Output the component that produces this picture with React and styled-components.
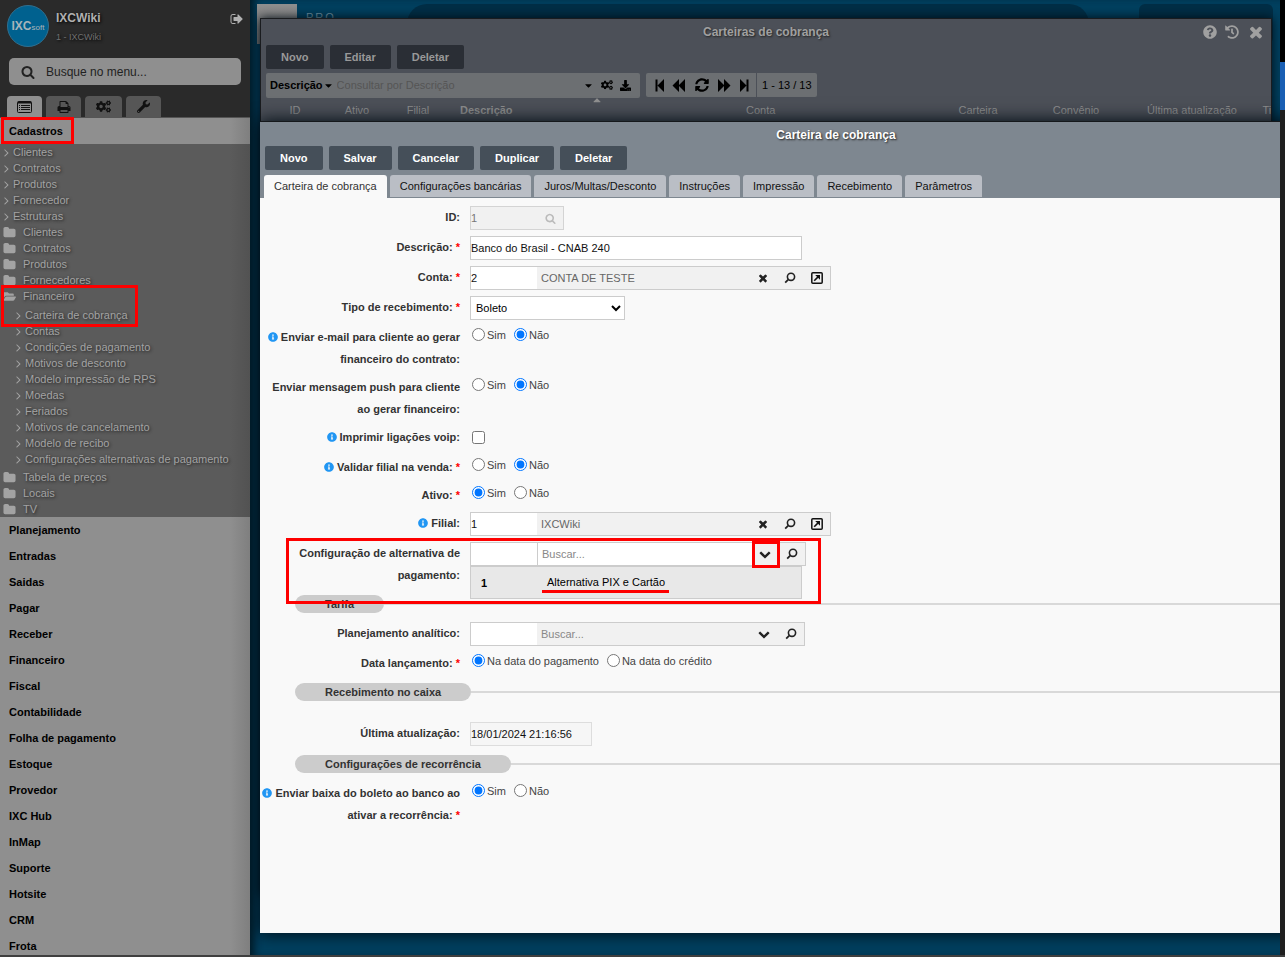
import React from 'react';
import styled, { createGlobalStyle, css } from 'styled-components';
import {
    FaCogs, FaWrench, FaFolderOpen, FaQuestionCircle, FaHistory, FaCaretDown, FaCaretUp,
    FaDownload, FaSyncAlt, FaInfoCircle,
} from 'react-icons/fa';

const shortcuts = ['Clientes', 'Contratos', 'Produtos', 'Fornecedor', 'Estruturas'];
const foldersBefore = ['Clientes', 'Contratos', 'Produtos', 'Fornecedores'];
const foldersAfter = ['Tabela de preços', 'Locais', 'TV'];
const financeiro = [
    'Contas', 'Condições de pagamento', 'Motivos de desconto', 'Modelo impressão de RPS', 'Moedas',
    'Feriados', 'Motivos de cancelamento', 'Modelo de recibo', 'Configurações alternativas de pagamento',
];
const sections = [
    'Planejamento', 'Entradas', 'Saidas', 'Pagar', 'Receber', 'Financeiro', 'Fiscal', 'Contabilidade',
    'Folha de pagamento', 'Estoque', 'Provedor', 'IXC Hub', 'InMap', 'Suporte', 'Hotsite', 'CRM', 'Frota',
];
const tabs = [
    'Carteira de cobrança', 'Configurações bancárias', 'Juros/Multas/Desconto', 'Instruções',
    'Impressão', 'Recebimento', 'Parâmetros',
];

/* ==============Icons============== */

const Glyph = ({ size, d }) => (
    <svg width={size} height={size} viewBox="0 0 1792 1792" fill="currentColor"><path d={d} /></svg>
);

const icons = {
    times: 'M1490 1322q0 40-28 68l-136 136q-28 28-68 28t-68-28l-294-294-294 294q-28 28-68 28t-68-28l-136-136q-28-28-28-68t28-68l294-294-294-294q-28-28-28-68t28-68l136-136q28-28 68-28t68 28l294 294 294-294q28-28 68-28t68 28l136 136q28 28 28 68t-28 68l-294 294 294 294q28 28 28 68z',
    folder: 'M1728 608v704q0 92-66 158t-158 66h-1216q-92 0-158-66t-66-158v-960q0-92 66-158t158-66h320q92 0 158 66t66 158v32h672q92 0 158 66t66 158z',
    chevron: 'M1683 808l-742 741q-19 19-45 19t-45-19l-742-741q-19-19-19-45.5t19-45.5l166-165q19-19 45-19t45 19l531 531 531-531q19-19 45-19t45 19l166 165q19 19 19 45.5t-19 45.5z',
    search: 'M1216 832q0-185-131.5-316.5t-316.5-131.5-316.5 131.5-131.5 316.5 131.5 316.5 316.5 131.5 316.5-131.5 131.5-316.5zm512 832q0 52-38 90t-90 38q-54 0-90-38l-343-342q-179 124-399 124-143 0-273.5-55.5t-225-150-150-225-55.5-273.5 55.5-273.5 150-225 225-150 273.5-55.5 273.5 55.5 225 150 150 225 55.5 273.5q0 220-124 399l343 343q37 37 37 90z',
    angle: 'M1171 960q0 13-10 23l-466 466q-10 10-23 10t-23-10l-50-50q-10-10-10-23t10-23l393-393-393-393q-10-10-10-23t10-23l50-50q10-10 23-10t23 10l466 466q10 10 10 23z',
    signOut: 'M704 1440q0 4 1 20t.5 26.5-3 23.5-10 19.5-20.5 6.5h-320q-119 0-203.5-84.5t-84.5-203.5v-704q0-119 84.5-203.5t203.5-84.5h320q13 0 22.5 9.5t9.5 22.5q0 4 1 20t.5 26.5-3 23.5-10 19.5-20.5 6.5h-320q-66 0-113 47t-47 113v704q0 66 47 113t113 47h312l11.5 1 11.5 3 8 5.5 7 9 2 13.5zm928-544q0 26-19 45l-544 544q-19 19-45 19t-45-19-19-45v-288h-448q-26 0-45-19t-19-45v-384q0-26 19-45t45-19h448v-288q0-26 19-45t45-19 45 19l544 544q19 19 19 45z',
    print: 'M448 1536h896v-256h-896v256zm0-640h896v-384h-160q-40 0-68-28t-28-68v-160h-640v640zm1152 64q0-26-19-45t-45-19-45 19-19 45 19 45 45 19 45-19 19-45zm128 0v416q0 13-9.5 22.5t-22.5 9.5h-224v160q0 40-28 68t-68 28h-960q-40 0-68-28t-28-68v-160h-224q-13 0-22.5-9.5t-9.5-22.5v-416q0-79 56.5-135.5t135.5-56.5h64v-544q0-40 28-68t68-28h672q40 0 88 20t76 48l152 152q28 28 48 76t20 88v256h64q79 0 135.5 56.5t56.5 135.5z',
};

const ListIcon = () => (
    <svg width="15" height="12" viewBox="0 0 15 12" fill="none" stroke="currentColor">
        <rect x="0.5" y="0.5" width="14" height="11" rx="1" />
        <path d="M1 1.5h13" strokeWidth="2" />
        <path d="M2 4.5h1M2 6.5h1M2 8.5h1M4 4.5h9M4 6.5h9M4 8.5h9" />
    </svg>
);

const LensIcon = () => (
    <svg width="12" height="12" viewBox="0 0 12 12" fill="none" stroke="currentColor">
        <circle cx="7" cy="4.8" r="3.6" strokeWidth="1.6" />
        <path d="M4.2 7.6L1.2 10.6" strokeWidth="1.8" />
    </svg>
);

const OpenIcon = () => (
    <svg width="12" height="12" viewBox="0 0 12 12" fill="none" stroke="#111">
        <rect x="0.8" y="0.8" width="10.4" height="10.4" rx="1" strokeWidth="1.5" />
        <path d="M3.2 8.8L7.6 4.4" strokeWidth="1.6" />
        <path d="M4.2 3h4.8v4.8z" fill="#111" stroke="none" />
    </svg>
);

const StepIcon = ({ flip }) => (
    <svg width="9" height="13" viewBox="0 0 9 13" fill="currentColor">
        <path d={flip ? 'M0 0L6.5 6.5L0 13zM6.5 0.5h2v12h-2z' : 'M9 0L2.5 6.5L9 13zM0.500 0.5h2v12h-2z'} />
    </svg>
);

const SkipIcon = ({ flip }) => (
    <svg width="14" height="13" viewBox="0 0 14 13" fill="currentColor">
        <path d={flip ? 'M1 0L7 6V0L13.5 6.5L7 13V7L1 13z' : 'M13 0L7 6V0L0.5 6.5L7 13V7L13 13z'} />
    </svg>
);

/* ==============Fields============== */

const Radios = ({ name, options, value }) => (
    <RadioGroup>
        {options.map((o) => (
            <label key={o}>
                <input type="radio" name={name} defaultChecked={o === value} />
                {o}
            </label>
        ))}
    </RadioGroup>
);

const yesNo = ['Sim', 'Não'];

const Field = ({ label, id, info, required, group, children }) => (
    <Row role={group ? 'group' : undefined} aria-label={group ? label : undefined}>
        <Label as={group ? 'span' : 'label'} htmlFor={group ? undefined : id}>
            {info && <FaInfoCircle />}
            {label}:{required && <b> *</b>}
        </Label>
        {children}
    </Row>
);

const Lookup = ({ id, code, text, open, children }) => (
    <LookupBox $open={open} $filled={!!text}>
        <input id={id} className="code" defaultValue={code} />
        <input className="text" aria-label="Buscar" placeholder="Buscar..." defaultValue={text} />
        {children}
    </LookupBox>
);

const FilledTools = () => (
    <>
        <Tool aria-label="Limpar"><Glyph size={12} d={icons.times} /></Tool>
        <Tool aria-label="Procurar"><LensIcon /></Tool>
        <Tool aria-label="Abrir"><OpenIcon /></Tool>
    </>
);

const Divider = ({ children, tall }) => (
    <DividerBox $tall={tall}><h3>{children}</h3></DividerBox>
);

/* ==============Sidebar============== */

const ArrowItem = ({ children, ...rest }) => (
    <Item href="#item" {...rest}><Glyph size={13} d={icons.angle} />{children}</Item>
);

const FolderItem = ({ children }) => (
    <Item href="#item" $folder><Glyph size={13} d={icons.folder} />{children}</Item>
);

const Menu = () => (
    <Sidebar>
        <Profile>
            <Logo>IXC<small>soft</small></Logo>
            <div className="who">
                <strong>IXCWiki</strong>
                <span>1 - IXCWiki</span>
            </div>
            <button aria-label="Sair"><Glyph size={14} d={icons.signOut} /></button>
        </Profile>
        <MenuSearch>
            <Glyph size={14} d={icons.search} />
            <input aria-label="Busque no menu" placeholder="Busque no menu..." />
        </MenuSearch>
        <MenuTabs>
            <MenuTab $active aria-label="Menu"><ListIcon /></MenuTab>
            <MenuTab aria-label="Imprimir"><Glyph size={14} d={icons.print} /></MenuTab>
            <MenuTab aria-label="Configurações"><FaCogs size={15} /></MenuTab>
            <MenuTab aria-label="Ferramentas"><FaWrench size={13} /></MenuTab>
        </MenuTabs>
        <Section href="#cadastros">
            Cadastros
            <Mark $top={-1} $left={1} $width={73} $height={27} />
        </Section>
        <SubMenu>
            {shortcuts.map((s) => <ArrowItem key={s}>{s}</ArrowItem>)}
            {foldersBefore.map((s) => <FolderItem key={s}>{s}</FolderItem>)}
            <MarkedItems>
                <Item href="#item" $folder><FaFolderOpen size={13} />Financeiro</Item>
                <ArrowItem $nested $first>Carteira de cobrança</ArrowItem>
                <Mark $top={-3} $left={1} $width={137} $height={42} />
            </MarkedItems>
            {financeiro.map((s) => <ArrowItem key={s} $nested>{s}</ArrowItem>)}
            <FolderGroup>
                {foldersAfter.map((s) => <FolderItem key={s}>{s}</FolderItem>)}
            </FolderGroup>
        </SubMenu>
        {sections.map((s) => <Section href="#secao" key={s}>{s}</Section>)}
    </Sidebar>
);

/* ==============Windows============== */

const ListWindow = () => (
    <BackWindow>
        <TitleBar>
            <h2>Carteiras de cobrança</h2>
            <div className="actions">
                <button aria-label="Ajuda"><FaQuestionCircle size={14} /></button>
                <button aria-label="Histórico"><FaHistory size={14} /></button>
                <button aria-label="Fechar"><Glyph size={18} d={icons.times} /></button>
            </div>
        </TitleBar>
        <Buttons>
            <Button $dim>Novo</Button>
            <Button $dim>Editar</Button>
            <Button $dim>Deletar</Button>
        </Buttons>
        <Toolbar>
            <Query>
                <button className="by">Descrição <FaCaretDown size={11} /></button>
                <input aria-label="Consultar" placeholder="Consultar por Descrição" />
                <button aria-label="Opções"><FaCaretDown size={11} /></button>
                <button aria-label="Configurar"><FaCogs size={12} /></button>
                <button aria-label="Exportar"><FaDownload size={11} /></button>
            </Query>
            <Pager>
                <button aria-label="Primeira"><StepIcon /></button>
                <button aria-label="Anterior"><SkipIcon /></button>
                <button aria-label="Atualizar" className="reload"><FaSyncAlt size={14} /></button>
                <button aria-label="Próxima"><SkipIcon flip /></button>
                <button aria-label="Última"><StepIcon flip /></button>
                <span>1 - 13 / 13</span>
            </Pager>
        </Toolbar>
        <Grid>
            <thead>
                <tr>
                    <Th $width={58}>ID</Th>
                    <Th $width={66}>Ativo</Th>
                    <Th $width={56}>Filial</Th>
                    <Th $width={286} $left $bold>Descrição<FaCaretUp size={12} /></Th>
                    <Th $width={200} $left>Conta</Th>
                    <Th $width={92}>Carteira</Th>
                    <Th $width={104}>Convênio</Th>
                    <Th $width={128}>Última atualização</Th>
                    <Th $width={34}>Tipo</Th>
                </tr>
            </thead>
        </Grid>
    </BackWindow>
);

const FormWindow = () => (
    <FrontWindow>
        <FormHeader>
            <TitleBar $bright><h2>Carteira de cobrança</h2></TitleBar>
            <Buttons>
                <Button>Novo</Button>
                <Button>Salvar</Button>
                <Button>Cancelar</Button>
                <Button>Duplicar</Button>
                <Button>Deletar</Button>
            </Buttons>
            <Tabs>
                {tabs.map((t, i) => <Tab key={t} $active={i === 0}>{t}</Tab>)}
            </Tabs>
        </FormHeader>
        <Form>
            <Field label="ID" id="id">
                <IdBox>
                    <input id="id" defaultValue="1" disabled />
                    <Glyph size={11} d={icons.search} />
                </IdBox>
            </Field>
            <Field label="Descrição" id="descricao" required>
                <TextInput id="descricao" $width={332} defaultValue="Banco do Brasil - CNAB 240" />
            </Field>
            <Field label="Conta" id="conta" required>
                <Lookup id="conta" code="2" text="CONTA DE TESTE"><FilledTools /></Lookup>
            </Field>
            <Field label="Tipo de recebimento" id="tipo" required>
                <Select id="tipo"><option>Boleto</option></Select>
            </Field>
            <Field label="Enviar e-mail para cliente ao gerar financeiro do contrato" info group>
                <Radios name="email" options={yesNo} value="Não" />
            </Field>
            <Field label="Enviar mensagem push para cliente ao gerar financeiro" group>
                <Radios name="push" options={yesNo} value="Não" />
            </Field>
            <Field label="Imprimir ligações voip" id="voip" info>
                <CheckHolder><input type="checkbox" id="voip" /></CheckHolder>
            </Field>
            <Field label="Validar filial na venda" info required group>
                <Radios name="validar" options={yesNo} value="Não" />
            </Field>
            <Field label="Ativo" required group>
                <Radios name="ativo" options={yesNo} value="Sim" />
            </Field>
            <Field label="Filial" id="filial" info>
                <Lookup id="filial" code="1" text="IXCWiki"><FilledTools /></Lookup>
            </Field>
            <MarkedItems>
                <Field label="Configuração de alternativa de pagamento" id="alternativa">
                    <Lookup id="alternativa" open>
                        <Tool aria-label="Expandir">
                            <Glyph size={12} d={icons.chevron} />
                            <Mark $top={-2} $left={0} $width={28} $height={27} />
                        </Tool>
                        <Tool aria-label="Procurar"><LensIcon /></Tool>
                        <Options role="listbox">
                            <li role="option" aria-selected="true">
                                <b>1</b>
                                <span>Alternativa PIX e Cartão</span>
                            </li>
                        </Options>
                    </Lookup>
                </Field>
                <Mark $top={-4} $left={26} $width={535} $height={66} />
            </MarkedItems>
            <Divider>Tarifa</Divider>
            <Field label="Planejamento analítico" id="planejamento">
                <Lookup id="planejamento">
                    <Tool aria-label="Expandir"><Glyph size={12} d={icons.chevron} /></Tool>
                    <Tool aria-label="Procurar"><LensIcon /></Tool>
                </Lookup>
            </Field>
            <Field label="Data lançamento" required group>
                <Radios
                    name="data"
                    options={['Na data do pagamento', 'Na data do crédito']}
                    value="Na data do pagamento"
                />
            </Field>
            <Divider tall>Recebimento no caixa</Divider>
            <Field label="Última atualização" id="atualizacao">
                <TextInput id="atualizacao" $width={122} $locked readOnly defaultValue="18/01/2024 21:16:56" />
            </Field>
            <Divider>Configurações de recorrência</Divider>
            <Field label="Enviar baixa do boleto ao banco ao ativar a recorrência" info required group>
                <Radios name="baixa" options={yesNo} value="Sim" />
            </Field>
        </Form>
    </FrontWindow>
);

const App = () => (
    <>
        <GlobalStyle />
        <Page>
            <Menu />
            <Desktop>
                <TopBar>
                    <div className="logo"></div>
                    <div className="brand">PRO —</div>
                    <div className="search"></div>
                    <div className="user"></div>
                </TopBar>
                <ListWindow />
                <FormWindow />
            </Desktop>
            <ScrollTrack><div></div></ScrollTrack>
        </Page>
    </>
);

const GlobalStyle = createGlobalStyle`
    * {
        box-sizing: border-box;
    }
    body {
        margin: 0;
        background: #3f3f3f;
        font-family: "Liberation Sans", Arial, sans-serif;
        font-size: 11px;
        overflow: hidden;
    }
    button, input, select {
        font: inherit;
        color: inherit;
    }
    button {
        border: 0;
        padding: 0;
        background: none;
        display: flex;
        align-items: center;
        justify-content: center;
    }
    a {
        color: inherit;
        text-decoration: none;
    }
    h2, h3, ul {
        margin: 0;
        padding: 0;
        font-size: inherit;
    }
    svg {
        flex: none;
    }
`

const Page = styled.div`
    display: flex;
    height: 100vh;
    border-bottom: 2px solid #3f3f3f;
`

const Mark = styled.i`
    position: absolute;
    z-index: 5;
    top: ${(p) => p.$top}px;
    left: ${(p) => p.$left}px;
    width: ${(p) => p.$width}px;
    height: ${(p) => p.$height}px;
    border: 3px solid #fe0000;
    pointer-events: none;
`

const MarkedItems = styled.div`
    position: relative;
`

const Sidebar = styled.nav`
    width: 250px;
    flex: none;
    overflow: hidden;
    background: #2a2a2a;
    color: #a0a0a0;
`

const Profile = styled.div`
    display: flex;
    align-items: flex-start;
    padding: 5px 6px 0 7px;
    height: 58px;

    .who {
        flex: 1;
        display: flex;
        flex-direction: column;
        padding: 5px 0 0 7px;
        text-shadow: 1px 1px 3px #000;
    }
    strong {
        font-size: 12px;
        line-height: 16px;
        color: #b0b0b0;
    }
    span {
        margin-top: 5px;
        font-size: 9px;
        line-height: 12px;
        color: #707070;
    }
    button {
        margin-top: 7px;
        color: #b0b0b0;
    }
`

const Logo = styled.div`
    display: flex;
    align-items: baseline;
    justify-content: center;
    width: 42px;
    height: 42px;
    border: 1px solid #2f6f8f;
    border-radius: 50%;
    background: #00618f;
    color: #a8b4ba;
    font-size: 12px;
    font-weight: bold;
    line-height: 40px;

    small {
        font-size: 8px;
        font-weight: normal;
    }
`

const MenuSearch = styled.div`
    display: flex;
    align-items: center;
    gap: 9px;
    height: 27px;
    margin: 0 9px 11px;
    padding-left: 12px;
    border-radius: 5px;
    background: #8f8f8f;
    color: #222;

    input {
        flex: 1;
        border: 0;
        background: none;
        font-size: 12px;
    }
    input::placeholder {
        color: #222;
    }
`

const MenuTabs = styled.div`
    display: flex;
    gap: 4px;
    padding-left: 7px;
    border-bottom: 1px solid #555;
`

const MenuTab = styled.button`
    width: 35px;
    height: 21px;
    border-radius: 4px 4px 0 0;
    background: ${(p) => (p.$active ? '#8f8f8f' : '#565656')};
    color: #111;

    &:nth-child(3) {
        width: 37px;
    }
`

const Section = styled.a`
    position: relative;
    display: block;
    padding-left: 9px;
    line-height: 26px;
    font-weight: bold;
    color: #000;
    background: linear-gradient(to right, #8f8f8f 230px, #7f7f7f);
`

const SubMenu = styled.div`
    background: linear-gradient(to right, #5b5b5b 230px, #525252);
    text-shadow: 1px 1px 3px #222;
`

const FolderGroup = styled.div`
    padding-top: 2px;
`

const Item = styled.a`
    display: flex;
    align-items: center;
    height: 16px;
    padding-left: ${(p) => (p.$nested ? 12 : 0)}px;
    color: #a3a3a3;

    ${(p) => p.$first && css`
        margin-top: 3px;
    `}
    ${(p) => p.$folder && css`
        padding-left: 3px;

        svg {
            margin-right: 7px;
        }
    `}
`

const Desktop = styled.main`
    position: relative;
    flex: 1;
    min-width: 0;
    overflow: hidden;
    background: #00405f;
    box-shadow: inset 8px 0 8px -4px #001824;
`

const TopBar = styled.div`
    display: flex;
    height: 40px;
    margin: 4px 7px;

    .logo {
        width: 40px;
        background: linear-gradient(#8f8f8f, #6f6f6f);
    }
    .brand {
        width: 110px;
        padding: 7px 0 0 9px;
        color: #6f93a3;
        letter-spacing: 2px;
    }
    .search {
        flex: 1;
        border-radius: 20px;
        background: #002e46;
    }
    .user {
        width: 134px;
        margin-left: 50px;
        border-radius: 6px;
        background: #002e46;
    }
`

const BackWindow = styled.section`
    position: absolute;
    top: 18px;
    right: 8px;
    bottom: 60px;
    left: 10px;
    overflow: hidden;
    border: 1px solid #1a1c1f;
    background: #4c5058;
    box-shadow: 0 0 10px #000c14;
    color: #8f8f8f;
`

const FrontWindow = styled.section`
    position: absolute;
    top: 121px;
    right: -132px;
    bottom: 22px;
    left: 10px;
    border-top: 1px solid #15181b;
    background: #f9f9f9;
    box-shadow: 0 0 16px 1px #000c14;
    color: #333;
`

const TitleBar = styled.header`
    position: relative;
    height: ${(p) => (p.$bright ? 24 : 26)}px;
    line-height: 26px;
    font-size: 12px;
    text-align: center;
    color: ${(p) => (p.$bright ? '#fff' : '#a0a0a0')};
    text-shadow: 1px 1px 2px #222;

    .actions {
        position: absolute;
        top: 5px;
        right: 6px;
        height: 16px;
        display: flex;
        gap: 8px;
    }
`

const Buttons = styled.div`
    display: flex;
    gap: 6px;
    padding: 0 5px;
`

const Button = styled.button`
    height: 24px;
    padding: 0 15px;
    border-radius: 2px;
    font-weight: bold;
    background: ${(p) => (p.$dim ? '#2a2e35' : '#454f59')};
    color: ${(p) => (p.$dim ? '#999' : '#fff')};
`

const Toolbar = styled.div`
    display: flex;
    gap: 6px;
    padding: 4px 5px 0;
`

const Query = styled.div`
    display: flex;
    align-items: center;
    gap: 7px;
    width: 374px;
    height: 25px;
    padding: 0 9px 1px 4px;
    border-radius: 2px;
    background: #6c6f72;
    color: #000;

    .by {
        font-weight: bold;
    }
    input {
        flex: 1;
        min-width: 0;
        border: 0;
        padding: 0;
        margin-left: -4px;
        background: none;
    }
    input::placeholder {
        color: #555;
    }
`

const Pager = styled.div`
    display: flex;
    align-items: center;
    height: 24px;
    padding-left: 3px;
    border-radius: 2px;
    background: #6c6f72;
    color: #000;

    button {
        width: 20px;
    }
    .reload {
        width: 25px;
    }
    span {
        margin-left: 2px;
        padding: 0 5px;
        border-left: 1px solid #4c5058;
        line-height: 24px;
    }
`

const Grid = styled.table`
    width: 1024px;
    margin-left: 5px;
    table-layout: fixed;
    border-collapse: collapse;
`

const Th = styled.th`
    position: relative;
    width: ${(p) => p.$width}px;
    height: 24px;
    padding: 0 0 0 ${(p) => (p.$left ? 14 : 0)}px;
    text-align: ${(p) => (p.$left ? 'left' : 'center')};
    font-weight: ${(p) => (p.$bold ? 'bold' : 'normal')};
    white-space: nowrap;

    svg {
        position: absolute;
        top: -4px;
        left: 145px;
    }
`

const FormHeader = styled.div`
    height: 76px;
    background: #7e8790;
`

const Tabs = styled.div`
    display: flex;
    gap: 3px;
    padding: 5px 4px 0;
`

const Tab = styled.button`
    height: ${(p) => (p.$active ? 23 : 22)}px;
    padding: 0 10px ${(p) => (p.$active ? 1 : 0)}px;
    border-radius: 3px 3px 0 0;
    background: ${(p) => (p.$active ? '#f9f9f9' : '#babec5')};
    color: ${(p) => (p.$active ? '#333' : '#111')};
`

const Form = styled.form`
    padding-top: 8px;
`

const Row = styled.div`
    display: flex;
    align-items: flex-start;
    gap: 10px;
    padding-bottom: 6px;
`

const Label = styled.label`
    width: 200px;
    line-height: 22px;
    font-weight: bold;
    text-align: right;

    svg {
        width: 10px;
        height: 10px;
        margin-right: 3px;
        vertical-align: -1px;
        color: #2196f3;
    }
    b {
        color: #f00;
    }
`

const fieldBox = css`
    height: 24px;
    border: 1px solid #ccc;
    background: #fff;
`

const TextInput = styled.input`
    ${fieldBox}
    width: ${(p) => p.$width}px;
    padding: 0;
    color: #111;
    ${(p) => p.$locked && css`
        background: #f6f6f6;
        border-color: #ddd;
    `}
`

const Select = styled.select`
    ${fieldBox}
    width: 155px;
    padding: 0 0 0 1px;
    border-radius: 0;
    color: #000;
`

const IdBox = styled.div`
    ${fieldBox}
    display: flex;
    align-items: center;
    width: 94px;
    background: #f1f1f1;
    border-color: #d4d4d4;
    color: #bbb;

    input {
        width: 74px;
        padding: 0;
        border: 0;
        background: none;
        color: #777;
    }
`

const LookupBox = styled.div`
    ${fieldBox}
    position: relative;
    display: flex;
    background: #f1f1f1;

    input {
        border: 0;
        padding: 0;
    }
    .code {
        width: 66px;
        background: #fff;
        color: #111;
    }
    .text {
        width: ${(p) => (p.$filled ? 213 : 214)}px;
        padding-left: 4px;
        background: none;
        color: #666;
    }
    ${(p) => p.$open && css`
        .text {
            width: 215px;
            border-left: 1px solid #ccc;
            background: #fff;
        }
    `}
    input::placeholder {
        color: #888;
    }
`

const Tool = styled.button.attrs({ type: 'button' })`
    position: relative;
    width: 27px;
    color: #222;

    &:first-of-type {
        width: 26px;
    }
`

const Options = styled.ul`
    position: absolute;
    z-index: 3;
    top: 23px;
    left: -1px;
    width: 332px;
    border: 1px solid #ccc;
    background: #e8e8e8;
    color: #000;
    list-style: none;

    li {
        display: flex;
        height: 31px;
        align-items: center;
        padding-left: 10px;
    }
    b {
        width: 61px;
    }
    span {
        padding: 3px 4px 2px 5px;
        border-bottom: 3px solid #fe0000;
    }
`

const RadioGroup = styled.div`
    display: flex;
    gap: 8px;
    padding: 2px 0 0 2px;
    color: #444;

    label {
        display: flex;
        gap: 2px;
        line-height: 15px;
    }
    input {
        width: 13px;
        height: 13px;
        margin: 0;
    }
`

const CheckHolder = styled.div`
    height: 24px;
    padding: 5px 2px;

    input {
        display: block;
        width: 13px;
        height: 13px;
        margin: 0;
    }
`

const DividerBox = styled.div`
    display: flex;
    align-items: center;
    margin: 3px 0 ${(p) => (p.$tall ? 21 : 9)}px 35px;

    h3 {
        padding: 0 30px;
        border-radius: 9px;
        line-height: 18px;
        background: #ccc;
    }
    &::after {
        content: '';
        flex: 1;
        height: 2px;
        background: #d9d9d9;
    }
`

const ScrollTrack = styled.div`
    width: 5px;
    flex: none;
    padding-top: 62px;
    background: linear-gradient(#000 62px, #1f1f1f 62px);

    div {
        height: 48px;
        background: #1a5fb4;
    }
`

export default App
